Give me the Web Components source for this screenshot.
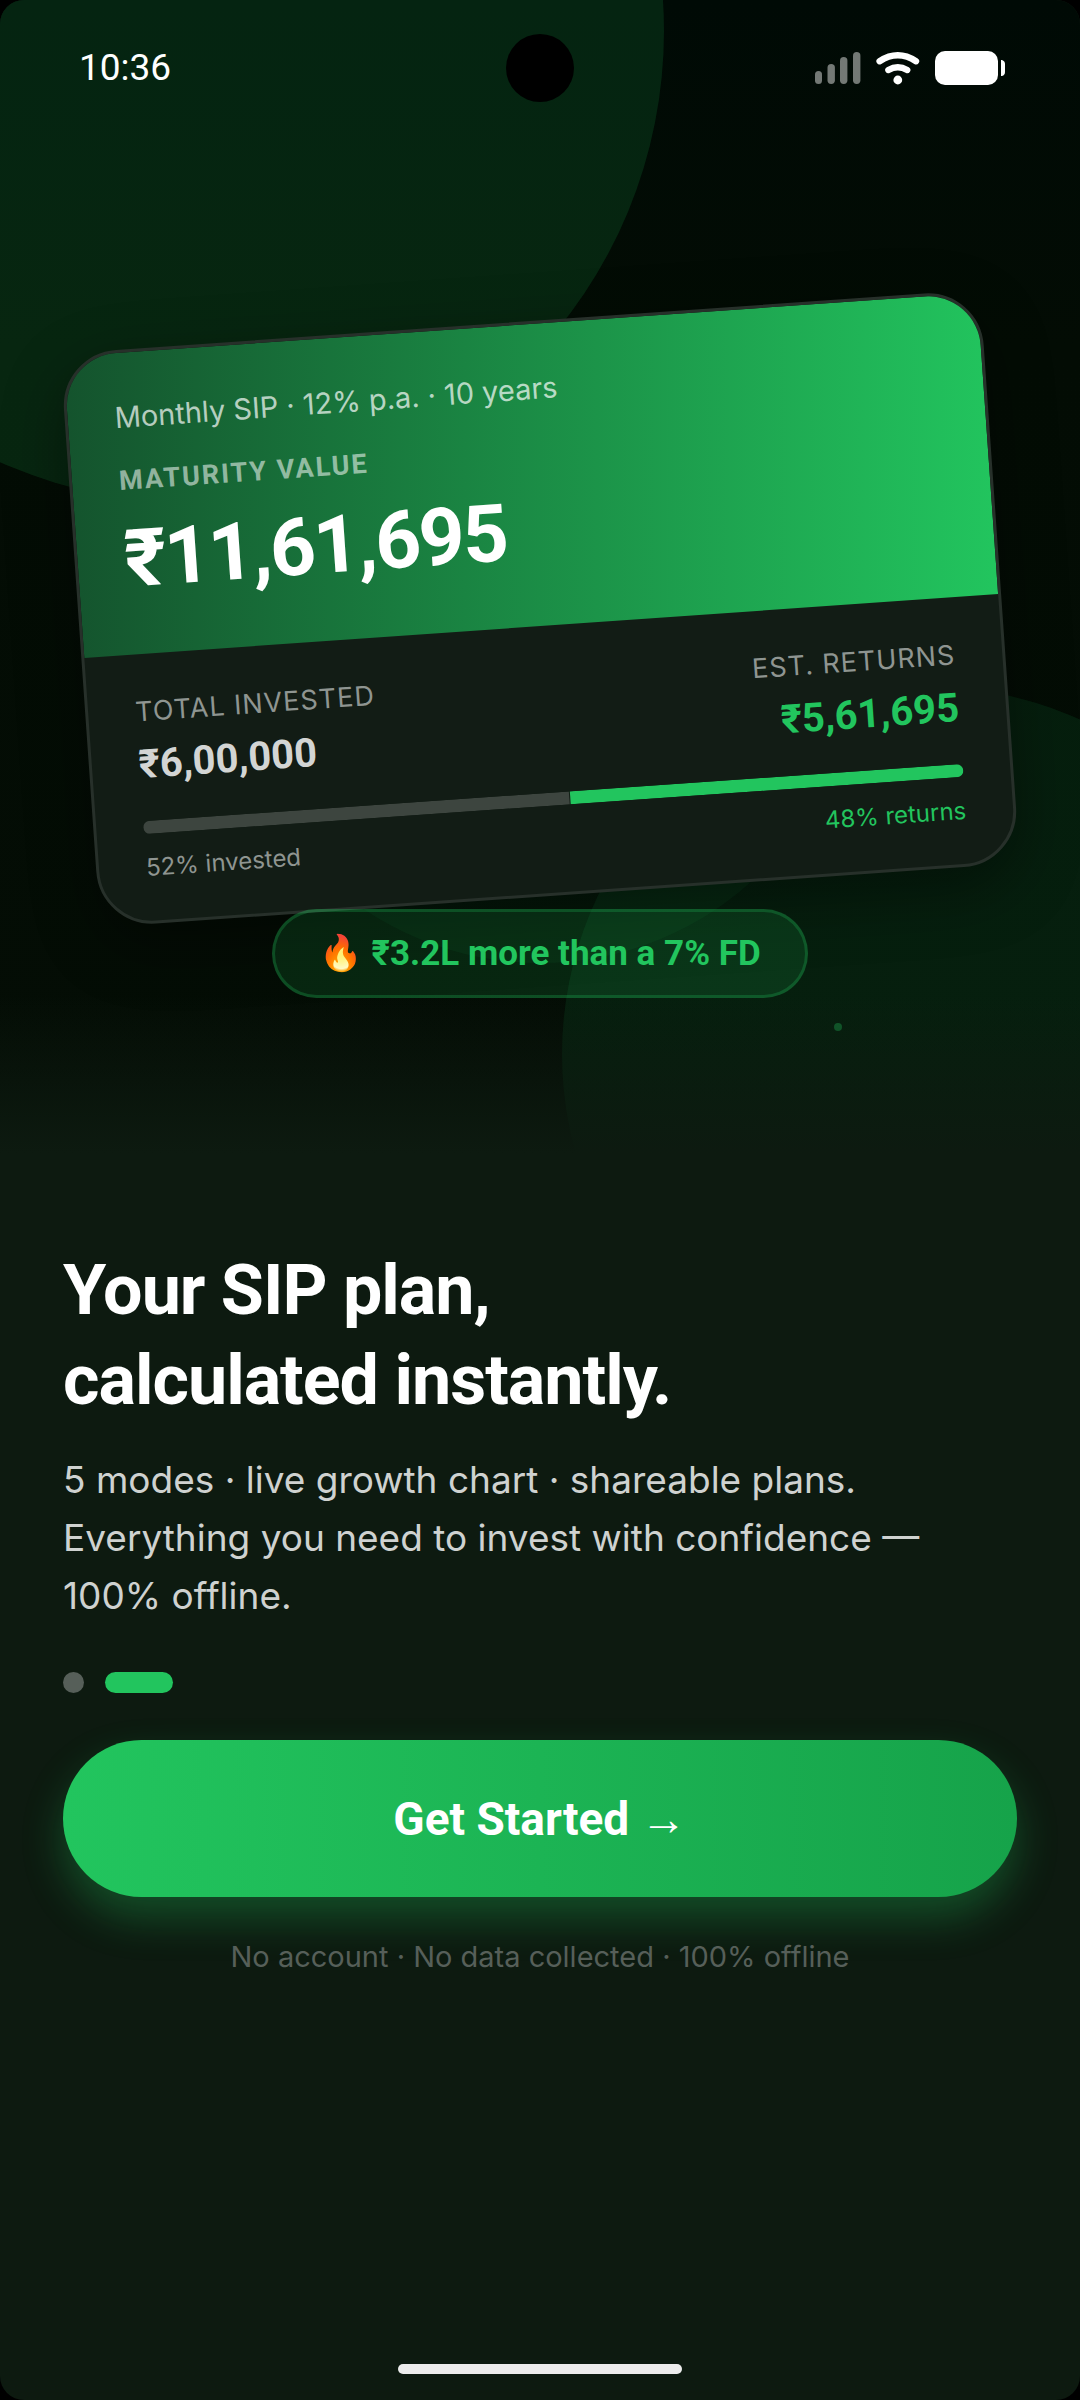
<!DOCTYPE html>
<html lang="en">
<head>
<meta charset="utf-8">
<meta name="viewport" content="width=device-width, initial-scale=1">
<title>SIP plan</title>
<style>
:root
{
    --green: #22c55e;
    --screen: #0d1a10;
    --sans: Inter, "Liberation Sans", sans-serif;
    --strong: Roboto, "Liberation Sans", "Noto Color Emoji", sans-serif;
}

body
{
    margin: 0;
    background-color: #000;
    color: #fff;
    font-family: var(--sans);
}
</style>
</head>
<body>

<onboarding-screen>
    <onboarding-hero slot="hero">
        <status-bar slot="status">10:36</status-bar>
        <plan-card percent="52">
            <span slot="plan">Monthly SIP · 12% p.a. · 10 years</span>
            <span slot="label">MATURITY VALUE</span>
            <span slot="value">₹11,61,695</span>
            <plan-stat label="TOTAL INVESTED" slot="stat">₹6,00,000</plan-stat>
            <plan-stat label="EST. RETURNS" slot="stat" highlight>₹5,61,695</plan-stat>
            <span slot="left">52% invested</span>
            <span slot="right">48% returns</span>
        </plan-card>
        <gain-badge>🔥 ₹3.2L more than a 7% FD</gain-badge>
    </onboarding-hero>
    <intro-text>
        <span slot="title">Your SIP plan,<br>calculated instantly.</span>
        5 modes · live growth chart · shareable plans. Everything you need to invest with confidence — 100% offline.
    </intro-text>
    <page-dots count="2" current="2"></page-dots>
    <primary-button>Get Started →</primary-button>
    <foot-note>No account · No data collected · 100% offline</foot-note>
    <home-indicator slot="bottom"></home-indicator>
</onboarding-screen>

<script>
function makeTemplate(html) {
    const template = document.createElement('template');
    template.innerHTML = html;
    return template;
}

class BaseElement extends HTMLElement {
    constructor(template) {
        super();
        this.attachShadow({ mode: 'open' });
        this.shadowRoot.appendChild(template.content.cloneNode(true));
    }
}

const screenTemplate = makeTemplate(`
<style>
:host
{
    display: flex;
    flex-direction: column;
    min-height: 100vh;
    background-color: var(--screen);
    border-radius: 24px;
    overflow: hidden;
}

.content
{
    display: flex;
    flex-direction: column;
    padding: 92px 63px 63px;
}

.bottom
{
    margin-top: auto;
}
</style>
<slot name="hero"></slot>
<main class="content"><slot></slot></main>
<div class="bottom"><slot name="bottom"></slot></div>
`);

customElements.define('onboarding-screen', class extends BaseElement {
    constructor() {
        super(screenTemplate);
    }
});

const heroTemplate = makeTemplate(`
<style>
:host
{
    display: block;
    position: relative;
    overflow: hidden;
    background-image: linear-gradient(to bottom, #000a05, #030c04 30%, #040d05);
}

.glow
{
    position: absolute;
    border-radius: 50%;
    background-color: var(--green);
}

.glow.top
{
    width: 944px;
    height: 944px;
    left: -280px;
    top: -441px;
    opacity: 0.14;
}

.glow.middle
{
    width: 630px;
    height: 630px;
    left: calc(50% - 315px);
    top: 333px;
    opacity: 0.06;
}

.glow.right
{
    width: 734px;
    height: 734px;
    right: -216px;
    top: 687px;
    opacity: 0.1;
}

.spark
{
    position: absolute;
    width: 8px;
    height: 8px;
    right: 238px;
    top: 1023px;
    border-radius: 50%;
    background-color: var(--green);
    opacity: 0.4;
}

.fade
{
    position: absolute;
    left: 0;
    right: 0;
    bottom: 0;
    height: 158px;
    background-image: linear-gradient(to bottom, transparent, var(--screen));
}

.layer
{
    position: relative;
    display: flex;
    flex-direction: column;
    padding-bottom: 155px;
}

.stack
{
    display: flex;
    flex-direction: column;
    align-items: center;
    gap: 13px;
    padding: 185px 79px 0;
}
</style>
<div class="glow top"></div>
<div class="glow middle"></div>
<div class="glow right"></div>
<div class="spark"></div>
<div class="fade"></div>
<div class="layer">
    <slot name="status"></slot>
    <div class="stack"><slot></slot></div>
</div>
`);

customElements.define('onboarding-hero', class extends BaseElement {
    constructor() {
        super(heroTemplate);
    }
});

const statusTemplate = makeTemplate(`
<style>
:host
{
    display: grid;
    grid-template-columns: 1fr auto 1fr;
    align-items: center;
    height: 136px;
    padding: 0 75px;
    font: 37px/44px var(--strong);
}

.time
{
    padding-left: 4px;
}

.camera
{
    width: 68px;
    height: 68px;
    border-radius: 50%;
    background-color: #000;
}

.icons
{
    display: flex;
    justify-content: flex-end;
    align-items: center;
    gap: 15px;
}

svg
{
    display: block;
    fill: #fff;
}
</style>
<span class="time"><slot></slot></span>
<div class="camera"></div>
<div class="icons">
    <svg width="46" height="34" viewBox="0 0 46 34">
        <g fill-opacity="0.45">
            <rect x="0" y="20" width="7" height="13" rx="3.5"/>
            <rect x="12.5" y="13" width="7.4" height="20" rx="3.7"/>
            <rect x="25" y="6" width="7.4" height="27" rx="3.7"/>
            <rect x="38" y="1" width="7.4" height="32" rx="3.7"/>
        </g>
    </svg>
    <svg width="44" height="34" viewBox="0 0 44 34">
        <path d="M3.6 10.2Q21.8 -1.6 40 10.2M12.4 19Q21.8 13.4 31.2 19" fill="none" stroke="#fff" stroke-width="6.4" stroke-linecap="round"/>
        <circle cx="21.8" cy="29" r="4.4"/>
    </svg>
    <svg width="70" height="34" viewBox="0 0 70 34">
        <rect x="0" y="0" width="63" height="34" rx="10"/>
        <path d="M66 9h1q3 1 3 4v8q0 3-3 4h-1z"/>
    </svg>
</div>
`);

customElements.define('status-bar', class extends BaseElement {
    constructor() {
        super(statusTemplate);
    }
});

const cardTemplate = makeTemplate(`
<style>
:host
{
    display: block;
    box-sizing: border-box;
    width: 100%;
    border: 3px solid #27302a;
    border-radius: 56px;
    overflow: hidden;
    background-color: #121c15;
    box-shadow: 0 21px 63px rgba(0, 0, 0, 0.4);
    transform: rotate(-4deg);
}

.head
{
    display: flex;
    flex-direction: column;
    padding: 47px;
    background-image: linear-gradient(94deg, #14532d, var(--green));
}

.plan
{
    margin-bottom: 30px;
    font-size: 29px;
    line-height: 35px;
    color: rgba(255, 255, 255, 0.7);
}

.label
{
    margin-bottom: 16px;
    font: bold 27px/32px var(--strong);
    letter-spacing: 2px;
    color: rgba(255, 255, 255, 0.55);
}

.value
{
    font: bold 80px/95px var(--strong);
    letter-spacing: -2px;
}

.body
{
    display: flex;
    flex-direction: column;
    padding: 42px 47px 39px;
}

.stats, .legend
{
    display: flex;
    justify-content: space-between;
}

.bar
{
    display: flex;
    gap: 1px;
    height: 13px;
    margin: 33px 0 19px;
    border-radius: 7px;
    overflow: hidden;
}

.invested
{
    background-color: #3d453f;
}

.gained
{
    flex: 1;
    background-color: var(--green);
}

.legend
{
    font-size: 24px;
    line-height: 29px;
    color: #8f9591;
}

.returns
{
    color: var(--green);
}
</style>
<div class="head">
    <div class="plan"><slot name="plan"></slot></div>
    <div class="label"><slot name="label"></slot></div>
    <div class="value"><slot name="value"></slot></div>
</div>
<div class="body">
    <div class="stats"><slot name="stat"></slot></div>
    <div class="bar">
        <div class="invested"></div>
        <div class="gained"></div>
    </div>
    <div class="legend">
        <slot name="left"></slot>
        <span class="returns"><slot name="right"></slot></span>
    </div>
</div>
`);

customElements.define('plan-card', class extends BaseElement {
    constructor() {
        super(cardTemplate);
    }

    connectedCallback() {
        this.shadowRoot.querySelector('.invested').style.width = this.getAttribute('percent') + '%';
    }
});

const statTemplate = makeTemplate(`
<style>
:host
{
    display: flex;
    flex-direction: column;
    gap: 14px;
    font: bold 40px/46px var(--strong);
    color: #d3d5d4;
}

:host([highlight])
{
    align-items: flex-end;
    color: var(--green);
}

.label
{
    font: 27px/32px var(--sans);
    letter-spacing: 1px;
    color: #8f9591;
}
</style>
<span class="label"></span>
<span><slot></slot></span>
`);

customElements.define('plan-stat', class extends BaseElement {
    constructor() {
        super(statTemplate);
    }

    connectedCallback() {
        this.shadowRoot.querySelector('.label').textContent = this.getAttribute('label');
    }
});

const badgeTemplate = makeTemplate(`
<style>
:host
{
    display: block;
    position: relative;
    padding: 21px 44px;
    border: 3px solid rgba(34, 197, 94, 0.25);
    border-radius: 45px;
    background-color: rgba(34, 197, 94, 0.14);
    font: bold 35px/41px var(--strong);
    color: var(--green);
}
</style>
<slot></slot>
`);

customElements.define('gain-badge', class extends BaseElement {
    constructor() {
        super(badgeTemplate);
    }
});

const introTemplate = makeTemplate(`
<style>
:host
{
    display: block;
}

h1
{
    margin: 0 0 26px;
    font: bold 70px/90px var(--strong);
    letter-spacing: -1px;
}

p
{
    margin: 0;
    font-size: 37px;
    line-height: 58px;
    color: #cfd2d0;
}
</style>
<h1><slot name="title"></slot></h1>
<p><slot></slot></p>
`);

customElements.define('intro-text', class extends BaseElement {
    constructor() {
        super(introTemplate);
    }
});

const dotsTemplate = makeTemplate(`
<style>
:host
{
    display: flex;
    gap: 21px;
    margin: 47px 0;
}

.dot
{
    width: 21px;
    height: 21px;
    border-radius: 11px;
    background-color: #565f59;
}

.dot.active
{
    width: 68px;
    background-color: var(--green);
}
</style>
`);

customElements.define('page-dots', class extends BaseElement {
    constructor() {
        super(dotsTemplate);
    }

    connectedCallback() {
        const current = Number(this.getAttribute('current'));
        for (let i = 1; i <= Number(this.getAttribute('count')); i++) {
            const dot = document.createElement('span');
            dot.className = i === current ? 'dot active' : 'dot';
            this.shadowRoot.appendChild(dot);
        }
    }
});

const buttonTemplate = makeTemplate(`
<style>
:host
{
    display: block;
}

button
{
    display: block;
    width: 100%;
    height: 157px;
    padding: 0;
    border: none;
    border-radius: 79px;
    background-image: linear-gradient(to right, var(--green), #16a34a);
    box-shadow: 0 21px 42px rgba(34, 197, 94, 0.3);
    font: bold 46px/54px var(--strong);
    color: #fff;
    cursor: pointer;
}
</style>
<button type="button"><slot></slot></button>
`);

customElements.define('primary-button', class extends BaseElement {
    constructor() {
        super(buttonTemplate);
    }
});

const noteTemplate = makeTemplate(`
<style>
:host
{
    display: block;
    margin-top: 42px;
    text-align: center;
    font-size: 29px;
    line-height: 35px;
    color: #565f59;
}
</style>
<slot></slot>
`);

customElements.define('foot-note', class extends BaseElement {
    constructor() {
        super(noteTemplate);
    }
});

const indicatorTemplate = makeTemplate(`
<style>
:host
{
    display: flex;
    justify-content: center;
    padding-bottom: 26px;
}

.line
{
    width: 284px;
    height: 10px;
    border-radius: 5px;
    background-color: #ececec;
}
</style>
<div class="line"></div>
`);

customElements.define('home-indicator', class extends BaseElement {
    constructor() {
        super(indicatorTemplate);
    }
});
</script>
</body>
</html>
